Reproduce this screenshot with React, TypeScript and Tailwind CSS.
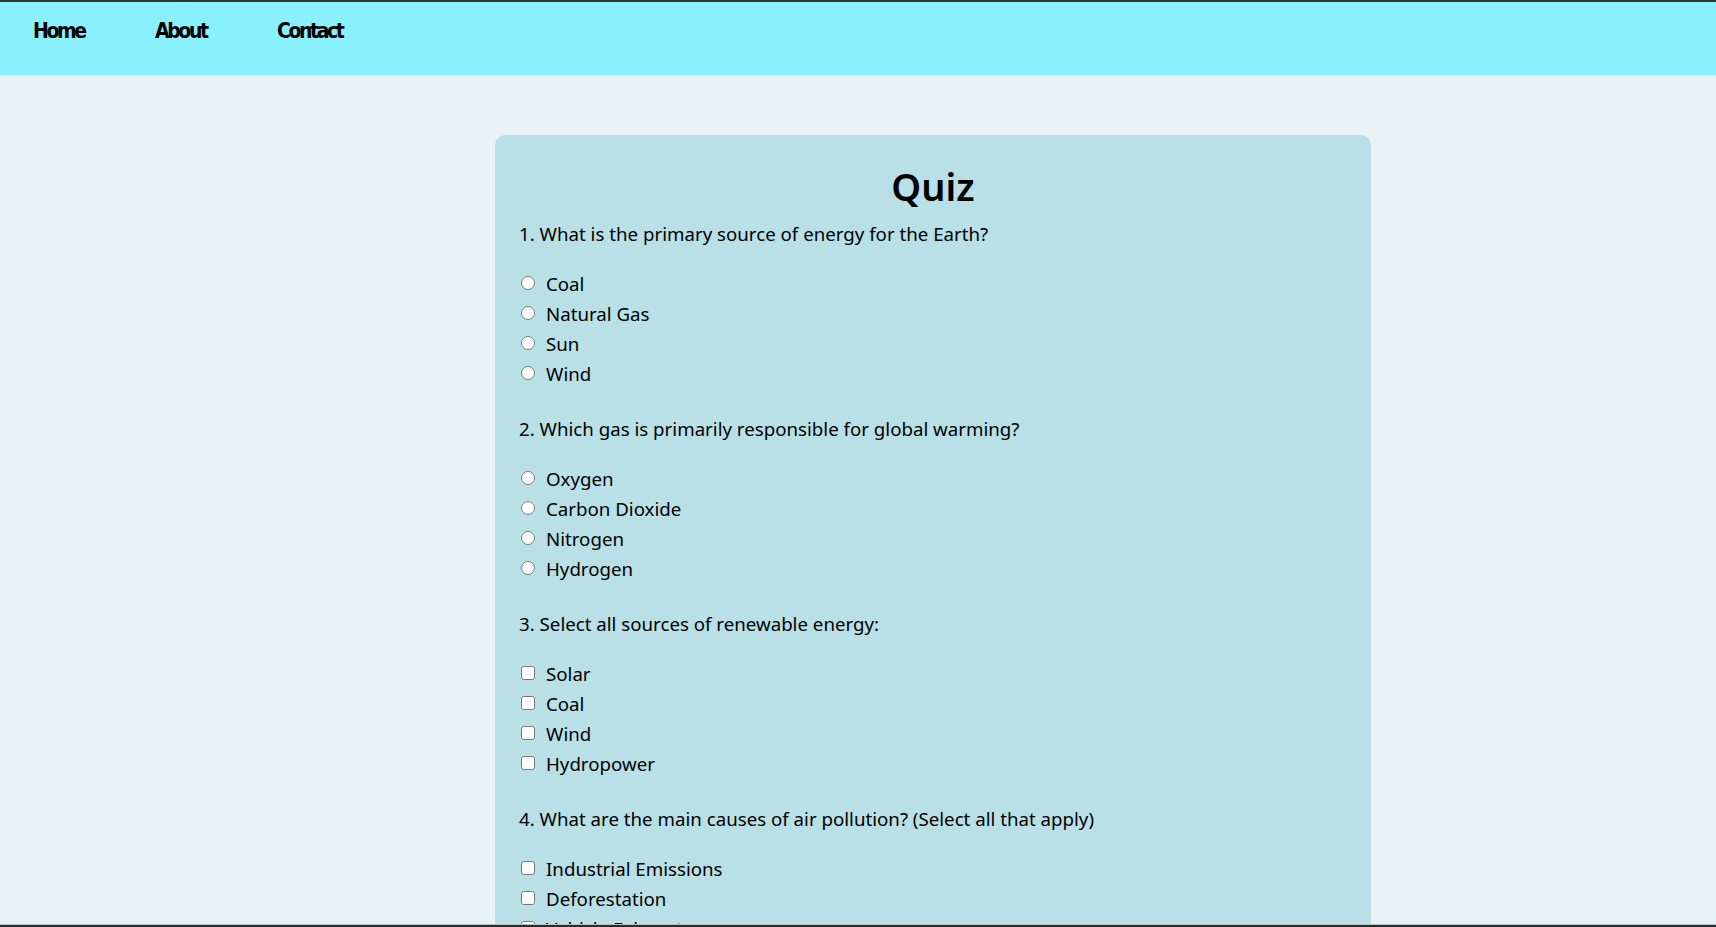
import React, { useState } from "react";

type Question = {
  id: number;
  text: string;
  type: "radio" | "checkbox";
  options: string[];
};

const questions: Question[] = [
  {
    id: 1,
    text: "What is the primary source of energy for the Earth?",
    type: "radio",
    options: ["Coal", "Natural Gas", "Sun", "Wind"],
  },
  {
    id: 2,
    text: "Which gas is primarily responsible for global warming?",
    type: "radio",
    options: ["Oxygen", "Carbon Dioxide", "Nitrogen", "Hydrogen"],
  },
  {
    id: 3,
    text: "Select all sources of renewable energy:",
    type: "checkbox",
    options: ["Solar", "Coal", "Wind", "Hydropower"],
  },
  {
    id: 4,
    text: "What are the main causes of air pollution? (Select all that apply)",
    type: "checkbox",
    options: ["Industrial Emissions", "Deforestation", "Vehicle Exhaust", "Volcanic Eruptions"],
  },
];

export default function App() {
  const [answers, setAnswers] = useState<Record<string, boolean | string>>({});

  const handleChange = (q: Question, opt: string) => {
    if (q.type === "radio") {
      setAnswers({ ...answers, [`q${q.id}`]: opt });
    } else {
      const key = `q${q.id}-${opt}`;
      setAnswers({ ...answers, [key]: !answers[key] });
    }
  };

  return (
    <div className="h-[927px] overflow-hidden flex flex-col bg-[#e9f3f5] border-t-2 border-[#333333] font-['Noto_Sans','Open_Sans',sans-serif] text-black">
      {/* Navbar */}
      <nav className="h-[73px] shrink-0 bg-[#89f1fc] flex items-start pl-[33px] pt-[14px]">
        {["Home", "About", "Contact"].map((link) => (
          <a
            key={link}
            href="#"
            className="w-[122px] font-['DejaVu_Sans',sans-serif] font-stretch-condensed text-[21px] font-black leading-[30px] text-black tracking-[-2.4px]"
          >
            {link}
          </a>
        ))}
      </nav>

      {/* Quiz card */}
      <div className="flex-1 min-h-0 overflow-hidden pt-[60px] pl-[495px]">
        <div className="w-[876px] bg-[#b8e0e6] rounded-[10px] pt-[27px] px-[26px]">
          <h1 className="text-center text-[38px] font-semibold leading-[48px] mb-[9px]">Quiz</h1>

          {questions.map((q) => (
            <div key={q.id} className="mb-[25px]">
              <p className="text-[18.7px] leading-[30px] h-[30px] mb-[20px] -ml-[2px]">
                {q.id}. {q.text}
              </p>
              {q.options.map((opt) => (
                <label key={opt} className="flex items-center gap-[11px] h-[30px] text-[18.7px] leading-[30px]">
                  <input
                    type={q.type}
                    name={`q${q.id}`}
                    checked={
                      q.type === "radio"
                        ? answers[`q${q.id}`] === opt
                        : !!answers[`q${q.id}-${opt}`]
                    }
                    onChange={() => handleChange(q, opt)}
                    className="m-0 -mt-[2px] w-[14px] h-[14px] shrink-0"
                  />
                  <span>{opt}</span>
                </label>
              ))}
            </div>
          ))}
        </div>
      </div>

      <div className="h-[3px] shrink-0 bg-[#2b2b2b] border-t border-[#b7c4c6]" />
    </div>
  );
}
